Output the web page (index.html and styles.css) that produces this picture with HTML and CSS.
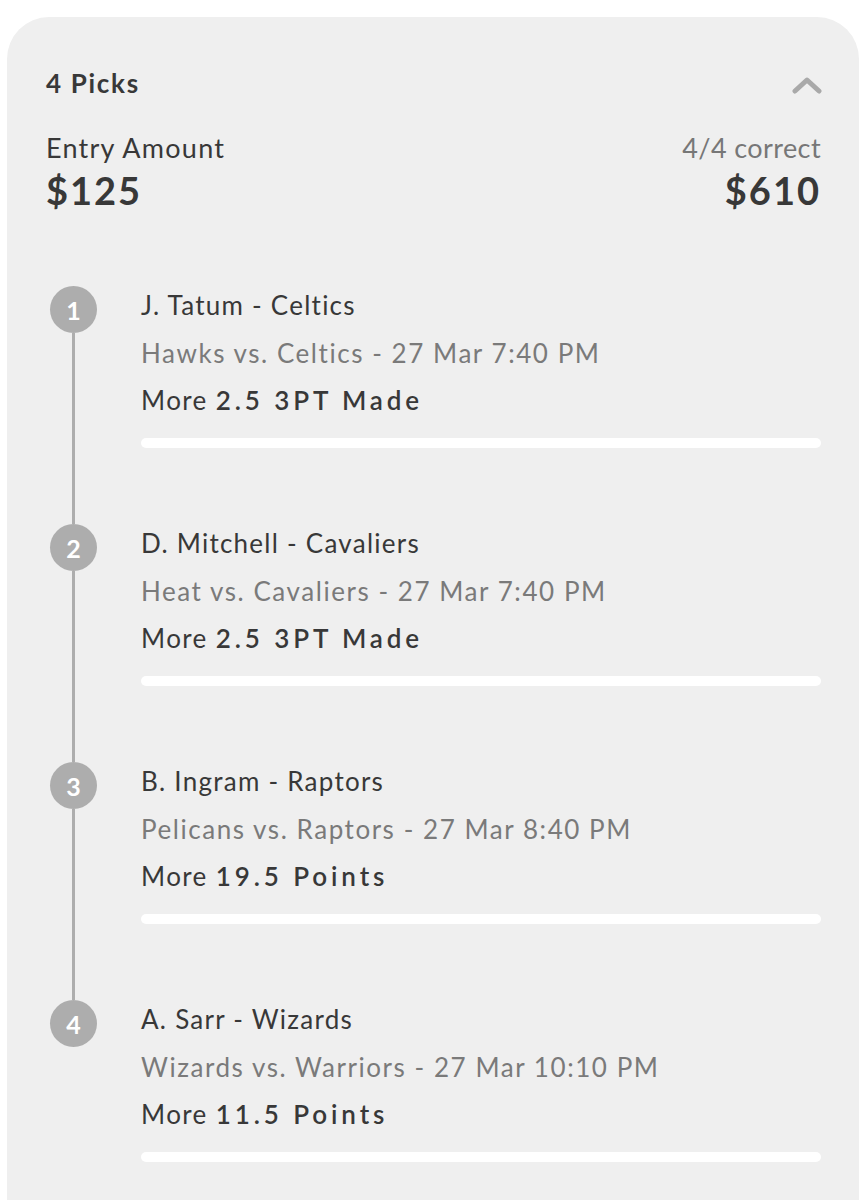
FILE: index.html
```html
<!DOCTYPE html>
<html>
<head>
<meta charset="utf-8">
<link rel="stylesheet" href="styles.css">
</head>
<body>
<div class="card">
  <div class="head">
    <div class="title">4 Picks</div>
    <svg class="chev" width="30" height="18" viewBox="0 0 30 18"><path d="M3 15 L15 4 L27 15" fill="none" stroke="#a9a9a9" stroke-width="5" stroke-linecap="round" stroke-linejoin="round"/></svg>
  </div>
  <div class="summary">
    <div class="col">
      <div class="label">Entry Amount</div>
      <div class="amount">$125</div>
    </div>
    <div class="col right">
      <div class="label muted">4/4 correct</div>
      <div class="amount">$610</div>
    </div>
  </div>
  <div class="picks">
    <div class="pick">
      <div class="rail"><div class="num">1</div><div class="line"></div></div>
      <div class="info">
        <div class="name">J. Tatum - Celtics</div>
        <div class="game">Hawks vs. Celtics - 27 Mar 7:40 PM</div>
        <div class="line-txt">More <span class="val">2.5 3PT Made</span></div>
        <div class="bar"></div>
      </div>
    </div>
    <div class="pick">
      <div class="rail"><div class="num">2</div><div class="line"></div></div>
      <div class="info">
        <div class="name">D. Mitchell - Cavaliers</div>
        <div class="game">Heat vs. Cavaliers - 27 Mar 7:40 PM</div>
        <div class="line-txt">More <span class="val">2.5 3PT Made</span></div>
        <div class="bar"></div>
      </div>
    </div>
    <div class="pick">
      <div class="rail"><div class="num">3</div><div class="line"></div></div>
      <div class="info">
        <div class="name">B. Ingram - Raptors</div>
        <div class="game">Pelicans vs. Raptors - 27 Mar 8:40 PM</div>
        <div class="line-txt">More <span class="val">19.5 Points</span></div>
        <div class="bar"></div>
      </div>
    </div>
    <div class="pick last">
      <div class="rail"><div class="num">4</div></div>
      <div class="info">
        <div class="name">A. Sarr - Wizards</div>
        <div class="game">Wizards vs. Warriors - 27 Mar 10:10 PM</div>
        <div class="line-txt">More <span class="val">11.5 Points</span></div>
        <div class="bar"></div>
      </div>
    </div>
  </div>
</div>
</body>
</html>
```
FILE: styles.css
```css
* { box-sizing: border-box; }
html, body { margin: 0; padding: 0; background: #ffffff; }
body {
  font-family: "Lato", "Open Sans", sans-serif;
  color: #383838;
  height: 1200px;
  overflow: hidden;
}
.card {
  margin: 17px 7px 0 7px;
  width: 852px;
  height: 1240px;
  background: #efefef;
  border-radius: 42px 42px 0 0;
  padding: 50px 38px 0 39px;
}
.head {
  display: flex;
  justify-content: space-between;
  align-items: center;
  height: 32px;
}
.title {
  font-size: 26px;
  font-weight: 700;
  line-height: 32px;
  letter-spacing: 1.7px;
}
.chev { margin-right: -1px; margin-top: 4px; }
.summary {
  display: flex;
  justify-content: space-between;
  margin-top: 33px;
}
.col { display: flex; flex-direction: column; }
.col.right { align-items: flex-end; }
.label {
  font-size: 27px;
  line-height: 32px;
  font-weight: 400;
  letter-spacing: 1.25px;
}
.label.muted { color: #777; letter-spacing: 0.4px; }
.amount {
  margin-top: 4px;
  font-size: 38px;
  line-height: 44px;
  font-weight: 700;
  letter-spacing: 2px;
}
.picks {
  margin-top: 74px;
  margin-left: 4px;
}
.pick {
  display: flex;
  height: 238px;
}
.rail {
  width: 47px;
  display: flex;
  flex-direction: column;
  align-items: center;
}
.num {
  width: 47px;
  height: 47px;
  border-radius: 50%;
  background: #adadad;
  color: #fff;
  font-weight: 700;
  font-size: 25px;
  display: flex;
  align-items: center;
  justify-content: center;
  flex: none;
}
.line {
  flex: 1;
  width: 3px;
  background: #adadad;
}
.info {
  flex: 1;
  margin-left: 44px;
  padding-top: 3px;
}
.name {
  font-size: 26px;
  line-height: 32px;
  color: #383838;
  letter-spacing: 1.25px;
}
.game {
  margin-top: 16px;
  font-size: 26px;
  line-height: 32px;
  color: #7a7a7a;
  letter-spacing: 1.55px;
}
.line-txt {
  margin-top: 15px;
  font-size: 26px;
  line-height: 32px;
  color: #383838;
  letter-spacing: 1.4px;
}
.val {
  font-weight: 600;
  letter-spacing: 3.9px;
}
.bar {
  margin-top: 22px;
  height: 10px;
  border-radius: 5px;
  background: #ffffff;
}
```
